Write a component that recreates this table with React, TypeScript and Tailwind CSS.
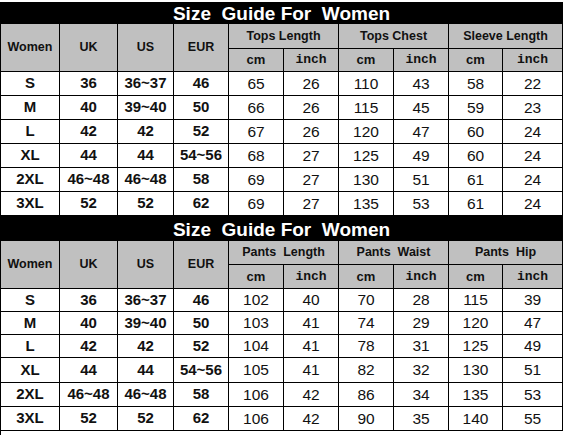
import React from 'react';

type Row = [string, string, string, string, number, number, number, number, number, number];

const topRows: Row[] = [
  ['S', '36', '36~37', '46', 65, 26, 110, 43, 58, 22],
  ['M', '40', '39~40', '50', 66, 26, 115, 45, 59, 23],
  ['L', '42', '42', '52', 67, 26, 120, 47, 60, 24],
  ['XL', '44', '44', '54~56', 68, 27, 125, 49, 60, 24],
  ['2XL', '46~48', '46~48', '58', 69, 27, 130, 51, 61, 24],
  ['3XL', '52', '52', '62', 69, 27, 135, 53, 61, 24],
];

const bottomRows: Row[] = [
  ['S', '36', '36~37', '46', 102, 40, 70, 28, 115, 39],
  ['M', '40', '39~40', '50', 103, 41, 74, 29, 120, 47],
  ['L', '42', '42', '52', 104, 41, 78, 31, 125, 49],
  ['XL', '44', '44', '54~56', 105, 41, 82, 32, 130, 51],
  ['2XL', '46~48', '46~48', '58', 106, 42, 86, 34, 135, 53],
  ['3XL', '52', '52', '62', 106, 42, 90, 35, 140, 55],
];

const sans = "font-['Liberation_Sans',Arial,sans-serif]";
const mono = "font-['Liberation_Mono','Courier_New',monospace]";

function Title({ tall }: { tall?: boolean }) {
  return (
    <div
      className={`${tall ? 'h-[26px] pt-[2px]' : 'h-[21px]'} flex items-center justify-center text-white text-[19px] font-bold whitespace-pre leading-none ${sans}`}
    >
      {'Size  Guide For  Women'}
    </div>
  );
}

function SizeGrid({ groups, rows, rowsClass }: { groups: string[]; rows: Row[]; rowsClass: string }) {
  const head = 'bg-[#c0c0c0] flex items-center justify-center text-[#111] font-bold';
  return (
    <div
      className={`grid grid-cols-[58px_57px_55px_54px_54px_54px_54px_54px_53px_59px] ${rowsClass} gap-px bg-black ${sans}`}
    >
      {['Women', 'UK', 'US', 'EUR'].map((h) => (
        <div key={h} className={`${head} row-span-2 text-[12.5px]`}>
          {h}
        </div>
      ))}
      {groups.map((g) => (
        <div key={g} className={`${head} col-span-2 text-[12.5px] whitespace-pre`}>
          {g}
        </div>
      ))}
      {groups.map((g) => (
        <React.Fragment key={g + 'u'}>
          <div className={`${head} text-[13px]`}>cm</div>
          <div className={`${head} text-[13px] ${mono}`}>inch</div>
        </React.Fragment>
      ))}
      {rows.map((r) =>
        r.map((v, i) => (
          <div
            key={r[0] + i}
            className={`bg-white flex items-center justify-center text-[#111] ${
              i < 4 ? 'font-bold text-[15px]' : 'text-[15.5px]'
            }`}
          >
            {v}
          </div>
        ))
      )}
    </div>
  );
}

export default function App() {
  return (
    <div className="w-[565px] h-[435px] bg-white pt-[2px]">
      <div className="w-[563px] bg-black p-px flex flex-col">
        <Title />
        <SizeGrid
          groups={['Tops Length', 'Tops Chest', 'Sleeve Length']}
          rows={topRows}
          rowsClass="grid-rows-[24px_22px_23px_23px_23px_23px_23px_23px]"
        />
        <Title tall />
        <SizeGrid
          groups={['Pants  Length', 'Pants  Waist', 'Pants  Hip']}
          rows={bottomRows}
          rowsClass="grid-rows-[23px_23px_22px_22px_22px_24px_23px_23px]"
        />
      </div>
      <div className="w-px h-[4px] bg-black" />
    </div>
  );
}
